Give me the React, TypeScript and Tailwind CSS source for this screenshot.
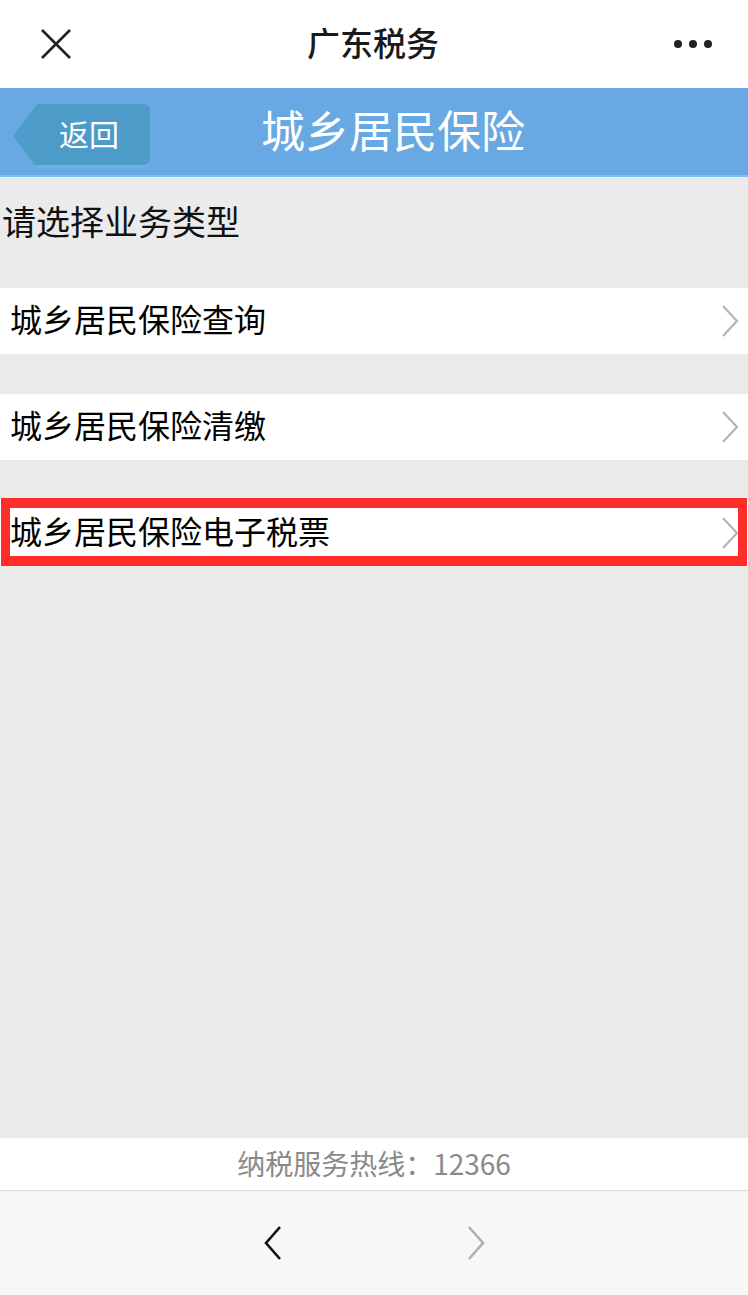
const cjk = "font-['PingFang_SC','Noto_Sans_CJK_SC',sans-serif]";

const items = ["城乡居民保险查询", "城乡居民保险清缴", "城乡居民保险电子税票"];

function Chevron({ className }: { className?: string }) {
  return (
    <svg width="20" height="34" viewBox="0 0 20 34" className={className}>
      <polyline points="3,2 17,17 3,32" fill="none" stroke="currentColor" strokeWidth="2.2" />
    </svg>
  );
}

export default function App() {
  return (
    <div className={`h-[1295px] w-[748px] flex flex-col bg-[#ebebeb] ${cjk}`}>
      {/* top bar */}
      <div className="h-[88px] bg-white flex items-center justify-between px-[40px] shrink-0">
        <svg width="32" height="30" viewBox="0 0 32 30">
          <path d="M2 1 L30 29 M30 1 L2 29" stroke="#222" strokeWidth="2.6" fill="none" />
        </svg>
        <span className="text-[33px] leading-none font-medium text-[#1a1a1a] pb-[4px]">广东税务</span>
        <div className="flex gap-[7px] mr-[-4px]">
          <span className="w-[8px] h-[8px] rounded-full bg-[#222]" />
          <span className="w-[8px] h-[8px] rounded-full bg-[#222]" />
          <span className="w-[8px] h-[8px] rounded-full bg-[#222]" />
        </div>
      </div>

      {/* blue header */}
      <div className="h-[89px] bg-[#68a9e3] border-b-2 border-[#7cc1ee] relative flex items-center justify-center shrink-0">
        <div className="absolute left-[13px] top-[16px] w-[137px] h-[64px] bg-[#4d9bc9] rounded-r-[6px] [clip-path:polygon(18%_0,100%_0,100%_100%,18%_100%,0_50%)] shadow-[inset_0_-3px_0_#6cb3dc] flex items-center justify-end pr-[31px]">
          <span className="text-[30px] leading-none text-white pb-[6px]">返回</span>
        </div>
        <span className="text-[44px] leading-none text-white ml-[38px] pb-[6px]">城乡居民保险</span>
      </div>

      {/* content */}
      <div className="flex-1">
        <p className="pt-[27px] pl-[2px] text-[34px] leading-[34px] text-[#111] mb-[50px]">请选择业务类型</p>
        <div className="flex flex-col gap-[40px]">
          {items.map((t, i) => (
            <div key={t} className="relative">
              <div className="h-[66px] bg-white flex items-center justify-between pl-[10px] pr-[8px]">
                <span className="text-[32px] leading-none text-black pb-[6px]">{t}</span>
                <Chevron className="text-[#b4b4b4]" />
              </div>
              {i === 2 && (
                <div className="absolute left-[1px] right-[1px] -top-[2px] h-[68px] border-[10px] border-x-[9px] border-[#ff2d2a]" />
              )}
            </div>
          ))}
        </div>
      </div>

      {/* footer */}
      <div className="h-[52px] bg-white flex items-center justify-center shrink-0">
        <span className="text-[28px] leading-none text-[#8a8a8a] pb-[2px]">纳税服务热线：12366</span>
      </div>
      <div className="h-[105px] bg-[#f7f7f7] border-t border-[#dcdcdc] flex items-center justify-center gap-[183px] shrink-0">
        <svg width="20" height="36" viewBox="0 0 20 36">
          <polyline points="17,2 3,18 17,34" fill="none" stroke="#111" strokeWidth="2.6" />
        </svg>
        <svg width="20" height="36" viewBox="0 0 20 36">
          <polyline points="3,2 17,18 3,34" fill="none" stroke="#b0b0b0" strokeWidth="2.6" />
        </svg>
      </div>
    </div>
  );
}
